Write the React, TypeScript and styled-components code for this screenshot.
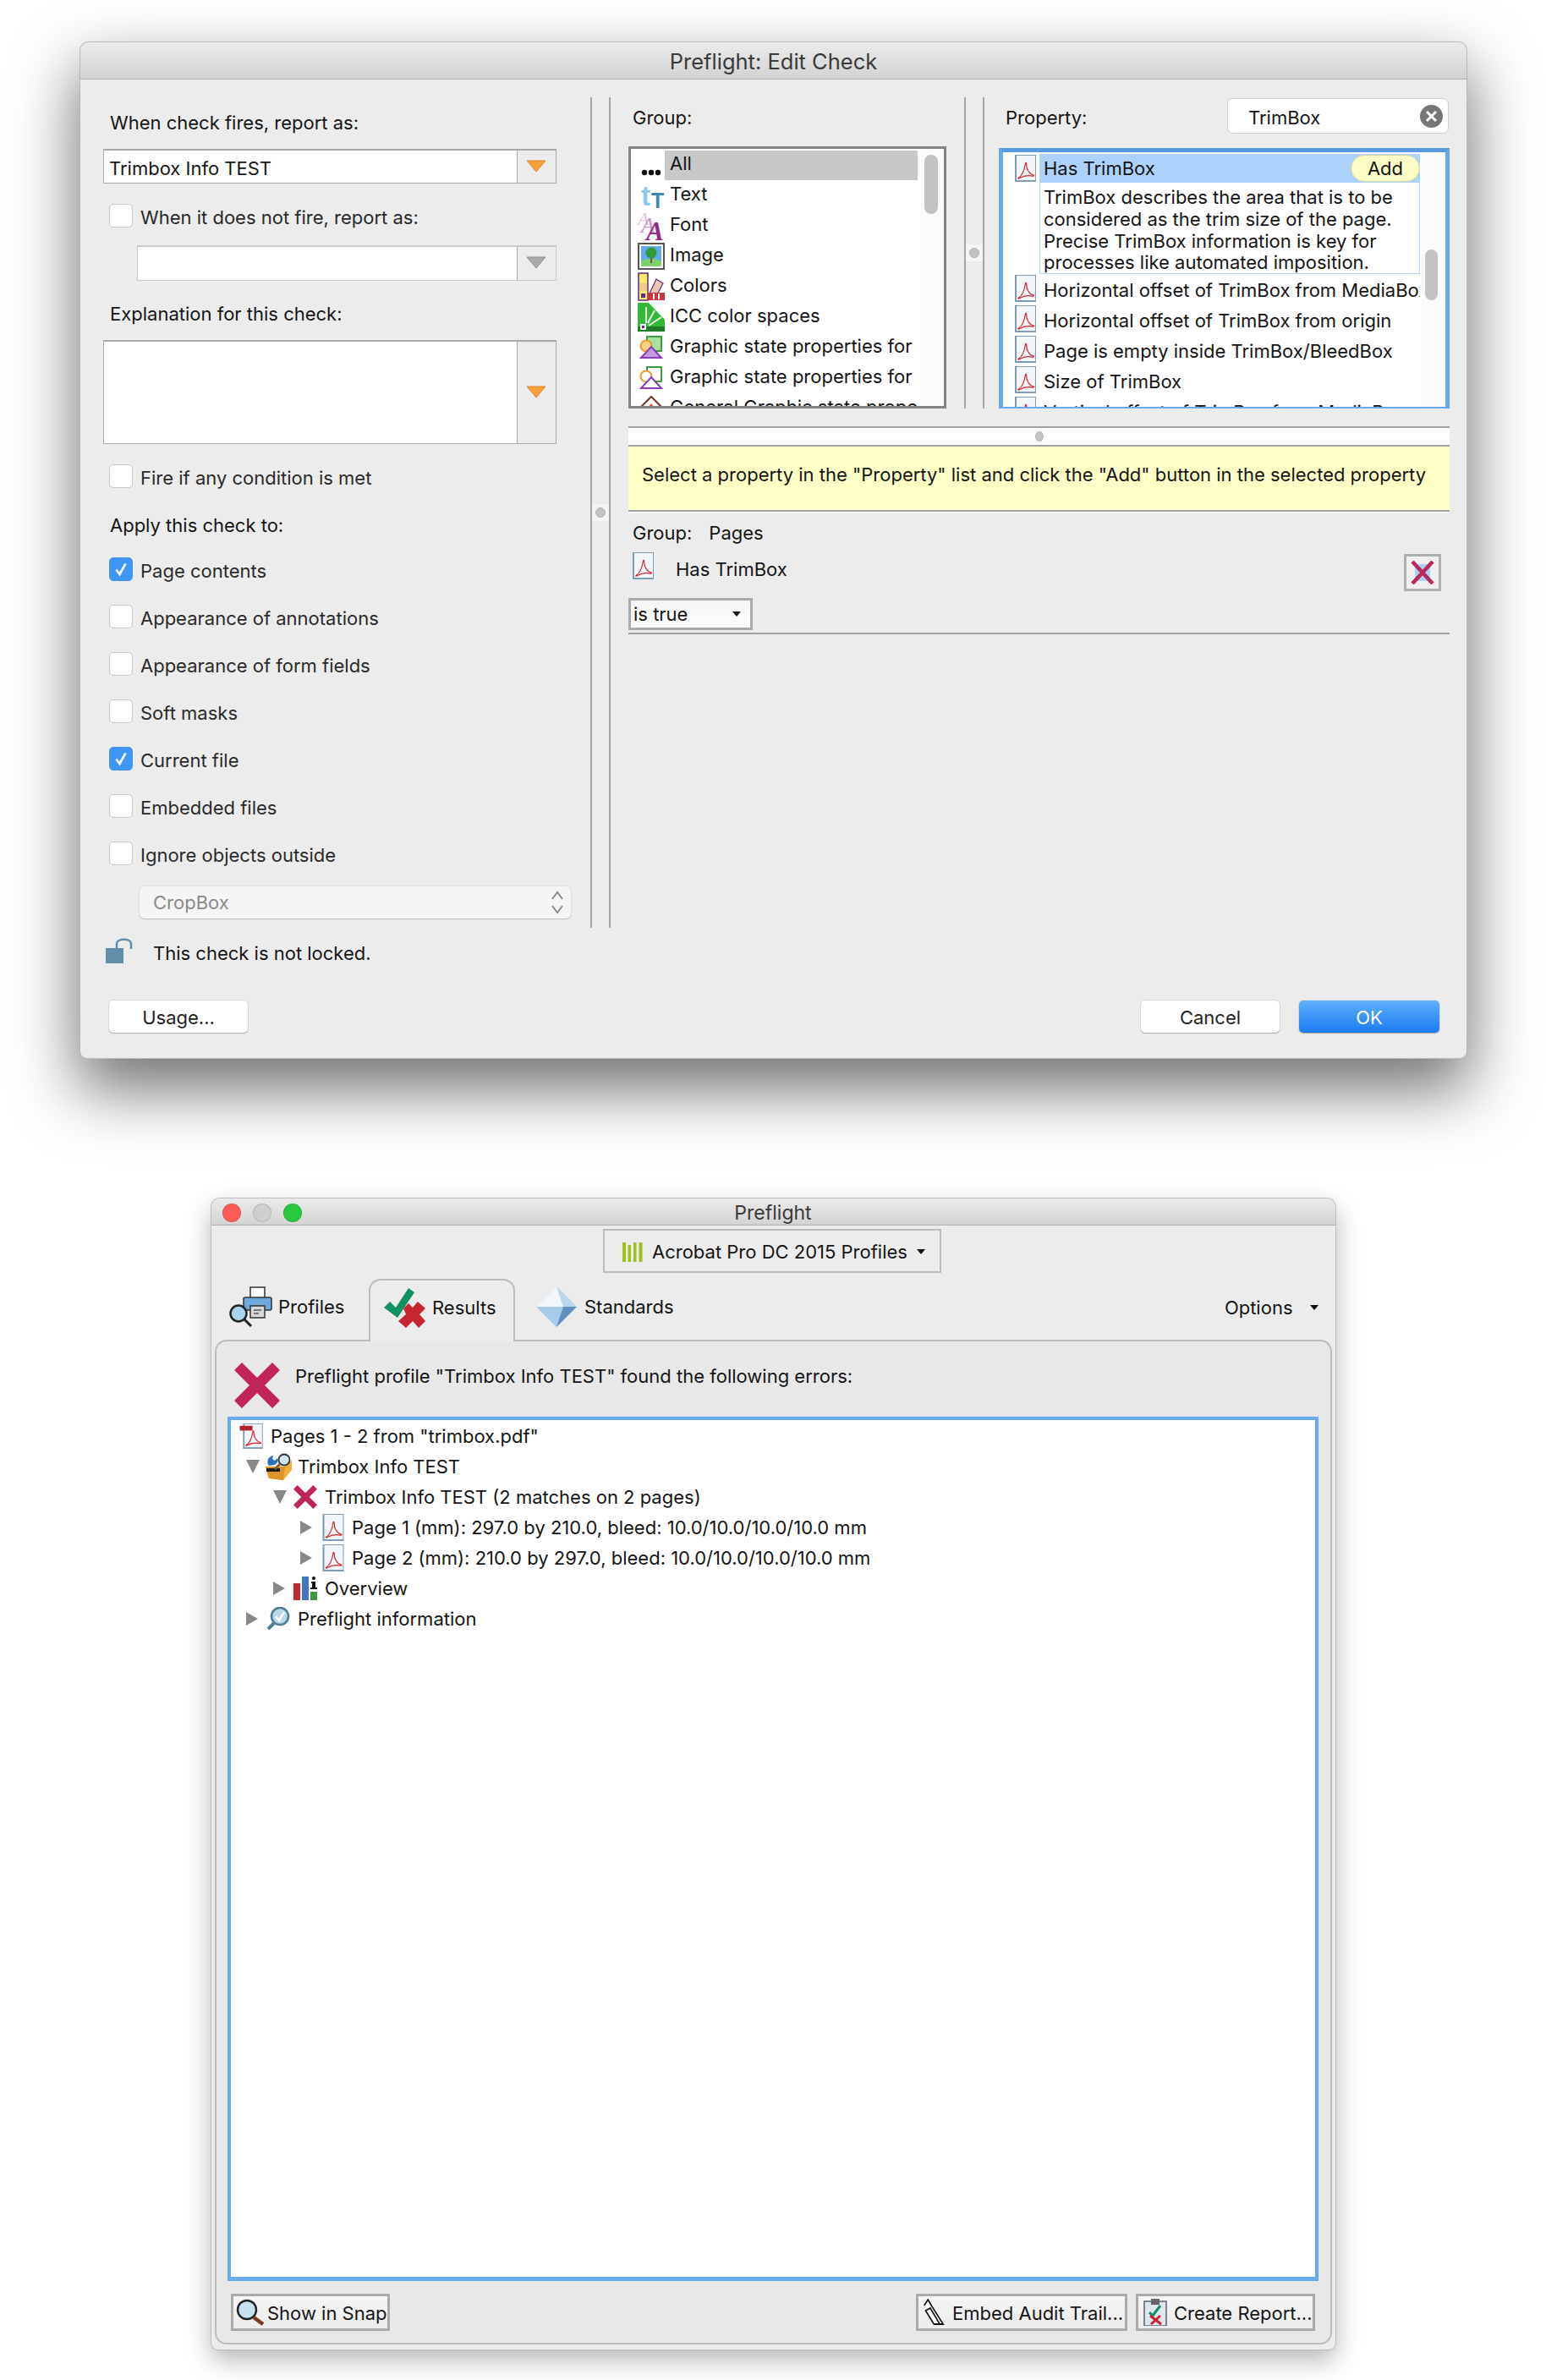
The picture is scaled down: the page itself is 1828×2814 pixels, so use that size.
import { FC, ReactNode } from "react";
import styled, { createGlobalStyle } from "styled-components";

const GlobalStyle = createGlobalStyle`
  html, body {
    margin: 0;
    padding: 0;
    background: #ffffff;
  }

  body {
    font-family: Inter, "Liberation Sans", sans-serif;
    font-size: 22px;
    color: #151515;
  }

  * {
    box-sizing: border-box;
  }
`;

/* icons */

const PdfIcon: FC<{ w?: number; h?: number; flag?: boolean }> = ({ w = 25, h = 32, flag }) => (
  <svg width={w} height={h} viewBox="0 0 25 32" style={{ flex: "none", display: "block", overflow: "visible" }}>
    <rect x="0" y="0" width="25" height="32" fill="#7d9db5" />
    <rect x="2" y="1" width="22" height="29" fill="#f3f6f9" />
    <path
      d="M4 27.500c3.500-2 7-8.500 8.300-16.500.4-2.500 1.500-2 1.400.5-.3 5 3.300 11.500 8.300 12.500 1 .2.5 1.500-.8 1.200-5-1-11-.5-15.500 2.300-1.500.9-2.500.5-1.700 0z"
      fill="none"
      stroke="#d5252c"
      strokeWidth="1.200"
    />
    {flag && <rect x="-4" y="3" width="16" height="6" fill="#b3202a" />}
  </svg>
);

const XMark: FC<{ size: number; color?: string }> = ({ size, color = "#c0245a" }) => (
  <svg width={size} height={size} viewBox="0 0 54 54" style={{ flex: "none", display: "block" }}>
    <polygon
      points="9,0 27,18 45,0 54,9 36,27 54,45 45,54 27,36 9,54 0,45 18,27 0,9"
      fill={color}
    />
  </svg>
);

const ThinX = () => (
  <svg width="28" height="28" viewBox="0 0 28 28" style={{ display: "block" }}>
    <path d="M2 1 26 27M26 1 2 27" stroke="#b8285a" strokeWidth="4.500" fill="none" />
  </svg>
);

const OrangeArrow: FC<{ muted?: boolean }> = ({ muted }) => (
  <svg width="24" height="15" viewBox="0 0 24 15" style={{ display: "block" }}>
    <polygon points="1,1 23,1 12,14" fill={muted ? "#a9a9a9" : "#f7a13c"} stroke={muted ? "#8f8f8f" : "#e5822a"} />
  </svg>
);

const TickIcon = () => (
  <svg width="16" height="18" viewBox="0 0 16 18">
    <path d="M2.500 9.500 6.500 15 13.500 2.500" fill="none" stroke="#fff" strokeWidth="2.600" />
  </svg>
);

const DotsIcon = () => (
  <svg width="32" height="32" viewBox="0 0 32 32">
    <circle cx="8" cy="25" r="3.200" fill="#111" />
    <circle cx="16" cy="25" r="3.200" fill="#111" />
    <circle cx="24" cy="25" r="3.200" fill="#111" />
  </svg>
);

const TextIcon = () => (
  <svg width="32" height="32" viewBox="0 0 32 32" style={{ overflow: "visible" }}>
    <text x="4" y="28" fontFamily="Liberation Sans" fontWeight="700" fontSize="33" fill="#8cc8ef">t</text>
    <text x="16" y="31" fontFamily="Liberation Sans" fontWeight="700" fontSize="25" fill="#3d84b8">T</text>
  </svg>
);

const FontIcon = () => (
  <svg width="32" height="33" viewBox="0 0 32 33" style={{ overflow: "visible" }}>
    <text x="0" y="15" fontFamily="Liberation Serif" fontStyle="italic" fontSize="22" fill="#e0c0e0">A</text>
    <text x="4" y="24" fontFamily="Liberation Serif" fontStyle="italic" fontSize="26" fill="#c690ca">A</text>
    <text x="10" y="33" fontFamily="Liberation Serif" fontStyle="italic" fontWeight="700" fontSize="31" fill="#92288e">A</text>
  </svg>
);

const ImageIcon = () => (
  <svg width="32" height="32" viewBox="0 0 32 32">
    <rect x="1" y="1" width="30" height="30" fill="#fff" stroke="#555" strokeWidth="2" />
    <rect x="4" y="4" width="24" height="24" fill="#63a8ea" />
    <path d="M4 22c6-4 17-4 24 0v6H4z" fill="#7fcf6a" />
    <rect x="15" y="14" width="2" height="10" fill="#6d5a38" />
    <circle cx="16" cy="12" r="6.500" fill="#2d9a3c" />
  </svg>
);

const ColorsIcon = () => (
  <svg width="32" height="34" viewBox="0 0 32 34">
    <rect x="1" y="1" width="11" height="32" fill="#f7e96a" stroke="#5a2b86" strokeWidth="1.500" />
    <rect x="2" y="13" width="9" height="9" fill="#f3c98a" />
    <rect x="4" y="25" width="5" height="5" fill="#5a2b86" />
    <polygon points="13,27 22,8 30,13 20,32" fill="#e8c8a8" stroke="#5a2b86" strokeWidth="1.200" />
    <rect x="12" y="24" width="20" height="9" fill="#c9343f" />
    <rect x="18" y="25" width="2" height="7" fill="#fff" />
    <rect x="24" y="25" width="2" height="7" fill="#fff" />
  </svg>
);

const IccIcon = () => (
  <svg width="32" height="34" viewBox="0 0 32 34">
    <polygon points="0,0 13,0 32,20 32,34 0,34" fill="#35b83a" />
    <polygon points="0,28 32,28 32,34 0,34" fill="#1f7d2a" />
    <path d="M10 24 10 5M12 24 20 9M13 27 28 17" stroke="#e9f8e6" strokeWidth="2" fill="none" />
    <rect x="3" y="25" width="7" height="7" fill="#fff" />
    <rect x="5" y="27" width="3" height="3" fill="#5a2b86" />
  </svg>
);

const StateIcon: FC<{ outline?: boolean }> = ({ outline }) => (
  <svg width="30" height="28" viewBox="0 0 30 28">
    <rect x="10" y="1" width="17" height="17" fill={outline ? "#fff" : "#a8e0a0"} stroke="#3f9a44" strokeWidth="2" />
    <circle cx="9" cy="12" r="6.500" fill={outline ? "#fff" : "#f7cf8a"} stroke="#eb9a2a" strokeWidth="2" />
    <polygon points="15,13 27,26 3,26" fill={outline ? "#fff" : "#c79ae0"} stroke="#8c3cb8" strokeWidth="2" />
  </svg>
);

const GeneralIcon = () => (
  <svg width="32" height="32" viewBox="0 0 32 32">
    <polygon points="16,2 30,16 16,30 2,16" fill="#fff" stroke="#6b3a28" strokeWidth="2" />
    <polygon points="16,10 22,18 10,18" fill="#e0452c" />
  </svg>
);

const LockIcon = () => (
  <svg width="32" height="30" viewBox="0 0 32 30">
    <rect x="0" y="12" width="21" height="18" fill="#5f8fa9" />
    <path d="M13 12V7c0-7 17-7 17 0v6" fill="none" stroke="#5f8fa9" strokeWidth="2.500" />
  </svg>
);

const BarsIcon = () => (
  <svg width="24" height="24" viewBox="0 0 24 24">
    <rect x="0" y="1" width="4" height="23" fill="#9dc21c" />
    <rect x="6.500" y="4" width="3.500" height="20" fill="#9dc21c" />
    <rect x="13" y="1" width="3.500" height="23" fill="#9dc21c" />
    <rect x="19.500" y="1" width="4" height="23" fill="#9dc21c" />
  </svg>
);

const ProfilesIcon = () => (
  <svg width="52" height="48" viewBox="0 0 52 48">
    <rect x="26" y="1" width="17" height="13" fill="#fff" stroke="#333" strokeWidth="1.500" />
    <rect x="18" y="13" width="33" height="15" rx="2" fill="#6fa9dc" stroke="#333" strokeWidth="1.500" />
    <rect x="26" y="23" width="17" height="14" fill="#d8d8d8" stroke="#333" strokeWidth="1.500" />
    <path d="M30 28h9M30 32h6" stroke="#555" strokeWidth="1.500" />
    <circle cx="12" cy="32" r="9.500" fill="#a8d4ee" stroke="#222" strokeWidth="2.500" />
    <path d="M19 39 27 47" stroke="#222" strokeWidth="3" />
  </svg>
);

const ResultsIcon = () => (
  <svg width="50" height="47" viewBox="0 0 50 47">
    <polygon points="0,23 7,16 14,23 29,0 36,5 16,35" fill="#0f9160" />
    <polygon points="23,24 29,18 34,23 40,16 49,24 42,31 49,39 41,47 34,39 26,47 17,39 26,31" fill="#c5262f" />
  </svg>
);

const DiamondIcon = () => (
  <svg width="48" height="48" viewBox="0 0 48 48">
    <polygon points="24,0 48,24 24,48 0,24" fill="#cfe2f4" />
    <polygon points="24,0 32,24 0,24" fill="#f2f7fc" />
    <polygon points="24,0 48,24 32,24" fill="#bcd6ee" />
    <polygon points="0,24 32,24 24,48" fill="#a9cbea" />
    <polygon points="32,24 48,24 24,48" fill="#5f8fbc" />
  </svg>
);

const ToolboxIcon = () => (
  <svg width="32" height="32" viewBox="0 0 32 32">
    <polygon points="1,16 24,16 32,8 32,20 22,32 5,30" fill="#f2ae3a" />
    <polygon points="1,16 24,16 22,32 5,30" fill="#dd9428" />
    <rect x="2" y="18" width="16" height="4" fill="#1b1b1b" />
    <path d="M5 15c-4-6 0-11 5-12l-1 4 3 2 3-3c2 4-1 7-4 8z" fill="#2d6fb8" />
    <circle cx="23" cy="8" r="6.500" fill="#cfe6f5" stroke="#333" strokeWidth="1.800" />
    <path d="M18 13 12 19" stroke="#8a5a2b" strokeWidth="3" />
  </svg>
);

const OverviewIcon = () => (
  <svg width="28" height="28" viewBox="0 0 28 28">
    <rect x="0" y="8" width="8" height="20" fill="#c5262f" />
    <rect x="10" y="0" width="8" height="28" fill="#3f76bd" />
    <rect x="20" y="18" width="8" height="10" fill="#3e9a3f" />
    <circle cx="24" cy="2" r="2" fill="#111" />
    <path d="M21 6h5v7h2v2h-8v-2h2V8h-1z" fill="#111" />
  </svg>
);

const LoupeIcon = () => (
  <svg width="28" height="28" viewBox="0 0 28 28">
    <path d="M9 19 2 26" stroke="#4c7f96" strokeWidth="4" />
    <circle cx="16" cy="11" r="10" fill="#b9d8e8" stroke="#4c7f96" strokeWidth="2.600" />
    <path d="M11 11 15 16 21 6" fill="none" stroke="#fff" strokeWidth="2.600" />
  </svg>
);

const SnapIcon = () => (
  <svg width="34" height="32" viewBox="0 0 34 32">
    <circle cx="13" cy="13" r="11" fill="#c6e2f2" stroke="#222" strokeWidth="2.400" />
    <path d="M21 22 32 30" stroke="#7a3a20" strokeWidth="4.500" />
  </svg>
);

const ClipIcon = () => (
  <svg width="30" height="32" viewBox="0 0 30 32">
    <path
      d="M3 8 8 1l6 9 14 20h-12L5 14l6-3 12 18"
      fill="#fff"
      stroke="#111"
      strokeWidth="1.800"
      transform="translate(1 0) scale(.9 1)"
    />
  </svg>
);

const ClipboardIcon = () => (
  <svg width="28" height="32" viewBox="0 0 28 32">
    <rect x="1" y="3" width="26" height="29" fill="#dfe6ee" stroke="#5b5f73" strokeWidth="1.500" />
    <rect x="9" y="0" width="10" height="7" fill="#666" />
    <path d="M7 16 11 20 20 8" fill="none" stroke="#0f9160" strokeWidth="3" />
    <path d="M8 20 21 30M20 20 9 30" stroke="#c5262f" strokeWidth="3" />
  </svg>
);

/* shared bits */

const Page = styled.div`
  display: flex;
  flex-direction: column;
  width: 1828px;
  min-height: 2814px;
  padding-top: 50px;
  background: #ffffff;
`;

const Window = styled.div<{ $left: number; $width: number; $height: number }>`
  display: flex;
  flex-direction: column;
  flex: none;
  margin-left: ${(p) => p.$left}px;
  width: ${(p) => p.$width}px;
  height: ${(p) => p.$height}px;
  background: #ececec;
  border-radius: 10px 10px 8px 8px;
`;

const DialogWindow = styled(Window)`
  box-shadow: 0 0 0 1px #b8b8b8, 0 34px 75px 4px rgba(0, 0, 0, 0.55);
`;

const PreflightWindow = styled(Window)`
  margin-top: 166px;
  box-shadow: 0 0 0 1px #bdbdbd, 0 12px 30px rgba(0, 0, 0, 0.3);
`;

const TitleBar = styled.div<{ $height: number; $size: number }>`
  display: flex;
  align-items: center;
  justify-content: center;
  position: relative;
  flex: none;
  height: ${(p) => p.$height}px;
  padding-top: 2px;
  font-size: ${(p) => p.$size}px;
  color: #3a3a3a;
  background: linear-gradient(#ebebeb, #d3d3d3);
  border-bottom: 1px solid #b1b1b1;
  border-radius: 10px 10px 0 0;
`;

const Line = styled.div<{ $top?: number }>`
  line-height: 30px;
  height: 30px;
  white-space: nowrap;
  margin-top: ${(p) => p.$top ?? 0}px;
`;

/* dialog */

const DialogBody = styled.div`
  display: flex;
  flex-direction: column;
  padding-top: 21px;
`;

const Panes = styled.div`
  display: flex;
  height: 982px;
`;

const LeftPane = styled.div`
  display: flex;
  flex-direction: column;
  flex: none;
  width: 603px;
  padding-left: 27px;
`;

const PaneLabel = styled(Line)`
  padding-left: 8px;
`;

const ComboBox = styled.div<{ $left?: number; $height: number; $top: number; $muted?: boolean }>`
  display: flex;
  flex: none;
  margin-left: ${(p) => p.$left ?? 0}px;
  margin-top: ${(p) => p.$top}px;
  width: ${(p) => 535.5 - (p.$left ?? 0)}px;
  height: ${(p) => p.$height}px;
  border: 1px solid ${(p) => (p.$muted ? "#c9c9c9" : "#a9a9a9")};
  border-top-width: 2px;
`;

const ComboText = styled.div`
  flex: 1;
  background: #ffffff;
  line-height: 42px;
  padding-left: 6px;
  border-right: 1px solid #a9a9a9;
`;

const ComboArrow = styled.div`
  display: flex;
  align-items: center;
  justify-content: center;
  flex: none;
  width: 45px;
  padding-bottom: 2px;
`;

const CheckRow = styled.div<{ $left?: number; $top?: number }>`
  display: flex;
  align-items: center;
  gap: 9px;
  flex: none;
  height: 28px;
  margin-left: ${(p) => p.$left ?? 7}px;
  margin-top: ${(p) => p.$top ?? 0}px;
  color: #2a2a2a;
  white-space: nowrap;
`;

const CheckLabel = styled.span`
  padding-top: 3px;
`;

const CheckBoxMark = styled.div<{ $on?: boolean }>`
  display: flex;
  align-items: center;
  justify-content: center;
  flex: none;
  width: 28px;
  height: 28px;
  border-radius: 5px;
  background: ${(p) => (p.$on ? "#3f96f7" : "#ffffff")};
  border: 1px solid ${(p) => (p.$on ? "#3f96f7" : "#c6c6c6")};
`;

const CheckList = styled.div`
  display: flex;
  flex-direction: column;
  gap: 28px;
  margin-top: 23px;
`;

const CropSelect = styled.div`
  display: flex;
  align-items: center;
  justify-content: space-between;
  flex: none;
  margin: 25px 0 0 43px;
  width: 510px;
  height: 38px;
  padding: 0 8px 0 16px;
  color: #8a8a8a;
  background: #f5f5f5;
  border-radius: 6px;
  box-shadow: 0 1px 1px #bdbdbd, 0 0 0 1px #e2e2e2;
`;

const Splitter = styled.div<{ $height?: number }>`
  display: flex;
  align-items: center;
  flex: none;
  width: 24px;
  height: ${(p) => (p.$height ? `${p.$height}px` : "auto")};
  border-left: 2px solid #a6a6a6;
  border-right: 2px solid #a6a6a6;
`;

const SplitterBand = styled.div`
  display: flex;
  align-items: center;
  justify-content: center;
  width: 100%;
  height: 20px;
  background: #f5f5f5;
`;

const Knob = styled.div`
  width: 12px;
  height: 12px;
  border-radius: 50%;
  background: #c3c3c3;
  border: 1px solid #b0b0b0;
`;

const RightPane = styled.div`
  display: flex;
  flex-direction: column;
  flex: none;
  width: 1012px;
  padding: 0 20px 0 21px;
`;

const TopRow = styled.div`
  display: flex;
  flex: none;
  height: 368px;
`;

const GroupColumn = styled.div`
  display: flex;
  flex-direction: column;
  flex: none;
  width: 376px;
  margin-right: 21px;
`;

const PropertyColumn = styled.div`
  display: flex;
  flex-direction: column;
  flex: none;
  width: 533px;
  margin-left: 17px;
`;

const ColumnLabel = styled(Line)`
  padding-left: 5px;
  margin-top: 9px;
`;

const ListFrame = styled.div`
  position: relative;
  flex: none;
  overflow: hidden;
  width: 100%;
  height: 310px;
  margin-top: 19px;
  padding-top: 1px;
  border: 3px solid #838383;
  background: #ffffff;
`;

const GroupRow = styled.div`
  display: flex;
  align-items: center;
  height: 36px;
  padding-left: 7px;
`;

const RowIcon = styled.div`
  display: flex;
  align-items: center;
  justify-content: center;
  flex: none;
  width: 33px;
`;

const RowLabel = styled.div<{ $selected?: boolean }>`
  width: 299px;
  height: 35px;
  padding-left: 6px;
  line-height: 31px;
  white-space: nowrap;
  overflow: hidden;
  background: ${(p) => (p.$selected ? "#c8c8c8" : "transparent")};
`;

const ScrollThumb = styled.div<{ $right: number; $top: number; $width: number; $height: number }>`
  position: absolute;
  right: ${(p) => p.$right}px;
  top: ${(p) => p.$top}px;
  width: ${(p) => p.$width}px;
  height: ${(p) => p.$height}px;
  border-radius: 8px;
  background: #c2c2c2;
`;

const PropertyHead = styled.div`
  display: flex;
  align-items: flex-start;
  justify-content: space-between;
  flex: none;
  height: 43px;
  margin-top: 1px;
  padding-left: 8px;
`;

const PropertyLabel = styled(Line)`
  margin-top: 8px;
`;

const SearchBox = styled.div`
  display: flex;
  align-items: center;
  justify-content: space-between;
  width: 262px;
  height: 42px;
  padding: 0 6px 0 24px;
  margin-right: 1px;
  background: #ffffff;
  border: 1px solid #cfcfcf;
  border-radius: 7px;
`;

const SearchText = styled.span`
  padding-top: 3px;
`;

const ClearButton = styled.div`
  display: flex;
  align-items: center;
  justify-content: center;
  width: 27px;
  height: 27px;
  border-radius: 50%;
  background: #767676;
`;

const PropertyFrame = styled.div`
  position: relative;
  flex: none;
  overflow: hidden;
  width: 100%;
  height: 308px;
  margin-top: 16px;
  padding-top: 2px;
  border: 5px solid #69a8ec;
  border-bottom-width: 2px;
  border-top-color: #5a9ae4;
  background: #ffffff;
`;

const PropertyRow = styled.div`
  display: flex;
  padding-left: 14px;
  gap: 4px;
`;

const PropertyIconSlot = styled.div`
  flex: none;
  width: 25px;
  height: 36px;
  padding-top: 1px;
`;

const PropertyContent = styled.div`
  flex: none;
  width: 450px;
  overflow: hidden;
`;

const PropertyName = styled.div<{ $selected?: boolean }>`
  display: flex;
  align-items: center;
  justify-content: space-between;
  height: ${(p) => (p.$selected ? 34 : 36)}px;
  padding: ${(p) => (p.$selected ? 0 : 1)}px 0 0 5px;
  white-space: nowrap;
  background: ${(p) => (p.$selected ? "#acd2fb" : "transparent")};
`;

const AddPill = styled.div`
  display: flex;
  align-items: center;
  justify-content: center;
  flex: none;
  width: 82px;
  height: 32px;
  border-radius: 16px;
  background: #fdfbc6;
  border: 1px solid #d8d69c;
`;

const PropertyDescription = styled.div`
  padding: 5px 0 0 4px;
  height: 108px;
  line-height: 25.800px;
  border: 1px solid #b9d7fa;
  border-top: none;
  white-space: nowrap;
`;

const ListTrack = styled.div`
  position: absolute;
  top: 0;
  right: 0;
  bottom: 0;
  width: 28px;
  background: #fbfbfb;
`;

const SashBand = styled.div`
  display: flex;
  align-items: center;
  justify-content: center;
  flex: none;
  height: 24px;
  margin-top: 21px;
  background: #ffffff;
  border-top: 2px solid #a0a0a0;
  border-bottom: 2px solid #a0a0a0;
`;

const SashKnob = styled(Knob)`
  width: 10px;
  height: 12px;
`;

const Hint = styled.div`
  display: flex;
  align-items: center;
  flex: none;
  height: 77px;
  padding: 0 0 9px 16px;
  background: #ffffc8;
  border-bottom: 2px solid #a0a0a0;
  box-shadow: 0 1px 0 #ffffff;
  white-space: nowrap;
`;

const GroupValue = styled(Line)`
  display: flex;
  gap: 20px;
  padding-left: 5px;
  margin-top: 10px;
`;

const ConditionRow = styled.div`
  display: flex;
  align-items: flex-start;
  flex: none;
  height: 46px;
  margin-top: 8px;
  padding: 0 10px 0 5px;
`;

const ConditionName = styled(Line)`
  flex: 1;
  margin: 5px 0 0 26px;
`;

const RemoveButton = styled.div`
  display: flex;
  align-items: center;
  justify-content: center;
  flex: none;
  position: relative;
  width: 44px;
  height: 44px;
  margin-top: 2px;
  border: 3px solid #b0b0b0;
  background: #f0f0f0;
`;

const RemoveFill = styled.div`
  position: absolute;
  width: 18px;
  height: 20px;
  background: #a9d2f5;
`;

const RemoveMark = styled.div`
  position: relative;
`;

const ValueSelect = styled.div`
  display: flex;
  align-items: center;
  justify-content: space-between;
  flex: none;
  width: 147px;
  height: 38px;
  margin-top: 8px;
  padding: 0 11px 0 3px;
  background: linear-gradient(#f4f4f4, #ffffff);
  border: 3px solid #aaaaaa;
`;

const SmallCaret = styled.div<{ $size?: number }>`
  flex: none;
  width: 0;
  height: 0;
  border-left: ${(p) => p.$size ?? 5}px solid transparent;
  border-right: ${(p) => p.$size ?? 5}px solid transparent;
  border-top: ${(p) => (p.$size ?? 5) + 1}px solid #111111;
`;

const Rule = styled.div`
  flex: none;
  height: 2px;
  margin-top: 3px;
  background: #a0a0a0;
`;

const LockRow = styled.div`
  display: flex;
  align-items: center;
  gap: 24px;
  height: 30px;
  margin-top: 12px;
  padding-left: 30px;
`;

const LockText = styled.span`
  padding-top: 6px;
`;

const FooterRow = styled.div`
  display: flex;
  align-items: center;
  gap: 23px;
  margin-top: 44px;
  padding: 0 32px 0 34px;
`;

const PushButton = styled.div<{ $primary?: boolean; $width: number }>`
  display: flex;
  align-items: center;
  justify-content: center;
  width: ${(p) => p.$width}px;
  height: 38px;
  padding-top: 2px;
  border-radius: 5px;
  color: ${(p) => (p.$primary ? "#ffffff" : "#222222")};
  background: ${(p) => (p.$primary ? "linear-gradient(#5fb0fb, #1a7cf3)" : "#ffffff")};
  box-shadow: 0 1px 1px #a8a8a8, 0 0 0 1px #dcdcdc;
`;

const Spacer = styled.div`
  flex: 1;
`;

/* preflight window */

const Lights = styled.div`
  position: absolute;
  left: 13px;
  top: 6px;
  display: flex;
  gap: 14px;
`;

const Light = styled.div<{ $color: string }>`
  width: 22px;
  height: 22px;
  border-radius: 50%;
  background: ${(p) => p.$color};
  border: 1px solid rgba(0, 0, 0, 0.1);
`;

const ProfileDrop = styled.div`
  display: flex;
  align-items: center;
  flex: none;
  align-self: flex-start;
  width: 400px;
  height: 52px;
  margin: 4px 0 0 463.500px;
  padding: 2px 0 0 21px;
  gap: 11px;
  border: 2px solid #bcbcbc;
`;

const TabRow = styled.div`
  display: flex;
  align-items: flex-start;
  flex: none;
  height: 74px;
  margin-top: 7px;
  padding: 0 20px 0 20.500px;
  position: relative;
  z-index: 1;
`;

const TabItem = styled.div<{ $width?: number; $left?: number; $gap?: number }>`
  display: flex;
  align-items: center;
  flex: none;
  width: ${(p) => (p.$width ? `${p.$width}px` : "auto")};
  height: 64px;
  margin-left: ${(p) => p.$left ?? 0}px;
  padding-top: 2px;
  gap: ${(p) => p.$gap ?? 7}px;
`;

const ActiveTab = styled(TabItem)`
  height: 74px;
  padding: 2px 0 10px 16px;
  background: #ececec;
  border: 2px solid #bcbcbc;
  border-bottom: none;
  border-radius: 14px 14px 0 0;
`;

const OptionsMenu = styled.div`
  display: flex;
  align-items: center;
  gap: 20px;
  margin-left: auto;
  height: 64px;
  padding-top: 4px;
`;

const ResultsPanel = styled.div`
  display: flex;
  flex-direction: column;
  flex: none;
  height: 1188px;
  margin: -2px 4px 0 4.500px;
  padding: 25px 16px 0 13px;
  background: #e8e8e8;
  border: 2px solid #bcbcbc;
  border-radius: 14px;
`;

const ErrorRow = styled.div`
  display: flex;
  align-items: flex-start;
  flex: none;
  height: 64px;
  gap: 18px;
  padding-left: 8px;
`;

const ErrorText = styled.div`
  line-height: 32px;
  white-space: nowrap;
`;

const TreeBox = styled.div`
  flex: none;
  width: 1290px;
  height: 1022px;
  padding-top: 1px;
  background: #ffffff;
  border: 4px solid #68a9ef;
  border-bottom-width: 5px;
`;

const TreeRow = styled.div<{ $indent: number }>`
  display: flex;
  align-items: center;
  height: 36px;
  padding-left: ${(p) => p.$indent}px;
  white-space: nowrap;
`;

const TreeToggle = styled.div<{ $width: number }>`
  flex: none;
  width: ${(p) => p.$width}px;
`;

const Triangle = styled.div<{ $open?: boolean }>`
  width: 0;
  height: 0;
  ${(p) =>
    p.$open
      ? `border-left: 8px solid transparent;
         border-right: 8px solid transparent;
         border-top: 16px solid #888888;`
      : `border-top: 8.500px solid transparent;
         border-bottom: 8.500px solid transparent;
         border-left: 14px solid #888888;`}
`;

const TreeIcon = styled.div<{ $width: number }>`
  display: flex;
  flex: none;
  width: ${(p) => p.$width}px;
`;

const ActionRow = styled.div`
  display: flex;
  flex: none;
  gap: 10px;
  margin-top: 15px;
  padding: 0 0 0 4px;
  width: 1286px;
`;

const ActionButton = styled.div<{ $width: number; $gap: number; $pad: number }>`
  display: flex;
  align-items: center;
  flex: none;
  gap: ${(p) => p.$gap}px;
  width: ${(p) => p.$width}px;
  height: 44px;
  padding-left: ${(p) => p.$pad}px;
  white-space: nowrap;
  overflow: hidden;
  background: linear-gradient(#f5f5f5, #ececec);
  border: 3px solid #ababab;
`;

const ActionLabel = styled.span`
  padding-top: 2px;
`;

const ActionSpacer = styled.div`
  flex: 1;
`;

const groups: { label: string; icon: ReactNode }[] = [
  { label: "All", icon: <DotsIcon /> },
  { label: "Text", icon: <TextIcon /> },
  { label: "Font", icon: <FontIcon /> },
  { label: "Image", icon: <ImageIcon /> },
  { label: "Colors", icon: <ColorsIcon /> },
  { label: "ICC color spaces", icon: <IccIcon /> },
  { label: "Graphic state properties for", icon: <StateIcon /> },
  { label: "Graphic state properties for", icon: <StateIcon outline /> },
  { label: "General Graphic state prope", icon: <GeneralIcon /> },
];

const properties = [
  "Horizontal offset of TrimBox from MediaBox",
  "Horizontal offset of TrimBox from origin",
  "Page is empty inside TrimBox/BleedBox",
  "Size of TrimBox",
  "Vertical offset of TrimBox from MediaBox",
];

const targets: { label: string; on?: boolean }[] = [
  { label: "Page contents", on: true },
  { label: "Appearance of annotations" },
  { label: "Appearance of form fields" },
  { label: "Soft masks" },
  { label: "Current file", on: true },
  { label: "Embedded files" },
  { label: "Ignore objects outside" },
];

const App: FC = () => {
  return (
    <Page>
      <GlobalStyle />

      <DialogWindow $left={95} $width={1639} $height={1201}>
        <TitleBar $height={44} $size={25.5}>Preflight: Edit Check</TitleBar>
        <DialogBody>
          <Panes>
            <LeftPane>
              <PaneLabel $top={15}>When check fires, report as:</PaneLabel>
              <ComboBox $top={16} $height={41}>
                <ComboText>Trimbox Info TEST</ComboText>
                <ComboArrow><OrangeArrow /></ComboArrow>
              </ComboBox>
              <CheckRow $top={24}>
                <CheckBoxMark />
                <CheckLabel>When it does not fire, report as:</CheckLabel>
              </CheckRow>
              <ComboBox $left={40} $top={21} $height={42} $muted>
                <ComboText />
                <ComboArrow><OrangeArrow muted /></ComboArrow>
              </ComboBox>
              <PaneLabel $top={24}>Explanation for this check:</PaneLabel>
              <ComboBox $top={16} $height={123}>
                <ComboText />
                <ComboArrow><OrangeArrow /></ComboArrow>
              </ComboBox>
              <CheckRow $top={24}>
                <CheckBoxMark />
                <CheckLabel>Fire if any condition is met</CheckLabel>
              </CheckRow>
              <PaneLabel $top={29}>Apply this check to:</PaneLabel>
              <CheckList>
                {targets.map((t) => (
                  <CheckRow key={t.label}>
                    <CheckBoxMark $on={t.on}>{t.on && <TickIcon />}</CheckBoxMark>
                    <CheckLabel>{t.label}</CheckLabel>
                  </CheckRow>
                ))}
              </CheckList>
              <CropSelect>
                CropBox
                <svg width="16" height="30" viewBox="0 0 16 30">
                  <path d="M2 11 8 3l6 8M2 19l6 8 6-8" fill="none" stroke="#8a8a8a" strokeWidth="2" />
                </svg>
              </CropSelect>
            </LeftPane>

            <Splitter>
              <SplitterBand><Knob /></SplitterBand>
            </Splitter>

            <RightPane>
              <TopRow>
                <GroupColumn>
                  <ColumnLabel>Group:</ColumnLabel>
                  <ListFrame>
                    <ListTrack />
                    {groups.map((g, i) => (
                      <GroupRow key={`${g.label}-${i}`}>
                        <RowIcon>{g.icon}</RowIcon>
                        <RowLabel $selected={i === 0}>{g.label}</RowLabel>
                      </GroupRow>
                    ))}
                    <ScrollThumb $right={7} $top={7} $width={16} $height={70} />
                  </ListFrame>
                </GroupColumn>

                <Splitter $height={368}>
                  <SplitterBand><Knob /></SplitterBand>
                </Splitter>

                <PropertyColumn>
                  <PropertyHead>
                    <PropertyLabel>Property:</PropertyLabel>
                    <SearchBox>
                      <SearchText>TrimBox</SearchText>
                      <ClearButton>
                        <svg width="15" height="15" viewBox="0 0 15 15">
                          <path d="M2 2 13 13M13 2 2 13" stroke="#fff" strokeWidth="3" />
                        </svg>
                      </ClearButton>
                    </SearchBox>
                  </PropertyHead>
                  <PropertyFrame>
                    <ListTrack />
                    <PropertyRow>
                      <PropertyIconSlot><PdfIcon /></PropertyIconSlot>
                      <PropertyContent>
                        <PropertyName $selected>
                          Has TrimBox
                          <AddPill>Add</AddPill>
                        </PropertyName>
                        <PropertyDescription>
                          TrimBox describes the area that is to be<br />
                          considered as the trim size of the page.<br />
                          Precise TrimBox information is key for<br />
                          processes like automated imposition.
                        </PropertyDescription>
                      </PropertyContent>
                    </PropertyRow>
                    {properties.map((name) => (
                      <PropertyRow key={name}>
                        <PropertyIconSlot><PdfIcon /></PropertyIconSlot>
                        <PropertyContent>
                          <PropertyName>{name}</PropertyName>
                        </PropertyContent>
                      </PropertyRow>
                    ))}
                    <ScrollThumb $right={9} $top={115} $width={15} $height={60} />
                  </PropertyFrame>
                </PropertyColumn>
              </TopRow>

              <SashBand><SashKnob /></SashBand>
              <Hint>
                Select a property in the "Property" list and click the "Add" button in the selected property
              </Hint>
              <GroupValue>
                <span>Group:</span>
                <span>Pages</span>
              </GroupValue>
              <ConditionRow>
                <PdfIcon />
                <ConditionName>Has TrimBox</ConditionName>
                <RemoveButton>
                  <RemoveFill />
                  <RemoveMark><ThinX /></RemoveMark>
                </RemoveButton>
              </ConditionRow>
              <ValueSelect>
                is true
                <SmallCaret />
              </ValueSelect>
              <Rule />
            </RightPane>
          </Panes>

          <LockRow>
            <LockIcon />
            <LockText>This check is not locked.</LockText>
          </LockRow>

          <FooterRow>
            <PushButton $width={164}>Usage...</PushButton>
            <Spacer />
            <PushButton $width={164}>Cancel</PushButton>
            <PushButton $primary $width={166}>OK</PushButton>
          </FooterRow>
        </DialogBody>
      </DialogWindow>

      <PreflightWindow $left={249.5} $width={1329} $height={1361}>
        <TitleBar $height={32} $size={23}>
          <Lights>
            <Light $color="#fc5b57" />
            <Light $color="#cfcfcf" />
            <Light $color="#2ac83f" />
          </Lights>
          Preflight
        </TitleBar>

        <ProfileDrop>
          <BarsIcon />
          Acrobat Pro DC 2015 Profiles
          <SmallCaret />
        </ProfileDrop>

        <TabRow>
          <TabItem $width={166}>
            <ProfilesIcon />
            Profiles
          </TabItem>
          <ActiveTab $width={173}>
            <ResultsIcon />
            Results
          </ActiveTab>
          <TabItem $left={25} $gap={9}>
            <DiamondIcon />
            Standards
          </TabItem>
          <OptionsMenu>
            Options
            <SmallCaret $size={5} />
          </OptionsMenu>
        </TabRow>

        <ResultsPanel>
          <ErrorRow>
            <XMark size={54} />
            <ErrorText>Preflight profile "Trimbox Info TEST" found the following errors:</ErrorText>
          </ErrorRow>

          <TreeBox>
            <TreeRow $indent={13}>
              <TreeIcon $width={34}><PdfIcon w={26} h={30} flag /></TreeIcon>
              Pages 1 - 2 from "trimbox.pdf"
            </TreeRow>
            <TreeRow $indent={18}>
              <TreeToggle $width={22}><Triangle $open /></TreeToggle>
              <TreeIcon $width={39}><ToolboxIcon /></TreeIcon>
              Trimbox Info TEST
            </TreeRow>
            <TreeRow $indent={50}>
              <TreeToggle $width={24}><Triangle $open /></TreeToggle>
              <TreeIcon $width={37}><XMark size={28} /></TreeIcon>
              Trimbox Info TEST (2 matches on 2 pages)
            </TreeRow>
            <TreeRow $indent={82}>
              <TreeToggle $width={26}><Triangle /></TreeToggle>
              <TreeIcon $width={35}><PdfIcon w={26} h={32} /></TreeIcon>
              Page 1 (mm): 297.0 by 210.0, bleed: 10.0/10.0/10.0/10.0 mm
            </TreeRow>
            <TreeRow $indent={82}>
              <TreeToggle $width={26}><Triangle /></TreeToggle>
              <TreeIcon $width={35}><PdfIcon w={26} h={32} /></TreeIcon>
              Page 2 (mm): 210.0 by 297.0, bleed: 10.0/10.0/10.0/10.0 mm
            </TreeRow>
            <TreeRow $indent={50}>
              <TreeToggle $width={24}><Triangle /></TreeToggle>
              <TreeIcon $width={37}><OverviewIcon /></TreeIcon>
              Overview
            </TreeRow>
            <TreeRow $indent={18}>
              <TreeToggle $width={24}><Triangle /></TreeToggle>
              <TreeIcon $width={37}><LoupeIcon /></TreeIcon>
              Preflight information
            </TreeRow>
          </TreeBox>

          <ActionRow>
            <ActionButton $width={188} $pad={3} $gap={3}><SnapIcon /><ActionLabel>Show in Snap</ActionLabel></ActionButton>
            <ActionSpacer />
            <ActionButton $width={250} $pad={3} $gap={7}><ClipIcon /><ActionLabel>Embed Audit Trail...</ActionLabel></ActionButton>
            <ActionButton $width={212} $pad={6} $gap={8}><ClipboardIcon /><ActionLabel>Create Report...</ActionLabel></ActionButton>
          </ActionRow>
        </ResultsPanel>
      </PreflightWindow>
    </Page>
  );
};

export default App;
